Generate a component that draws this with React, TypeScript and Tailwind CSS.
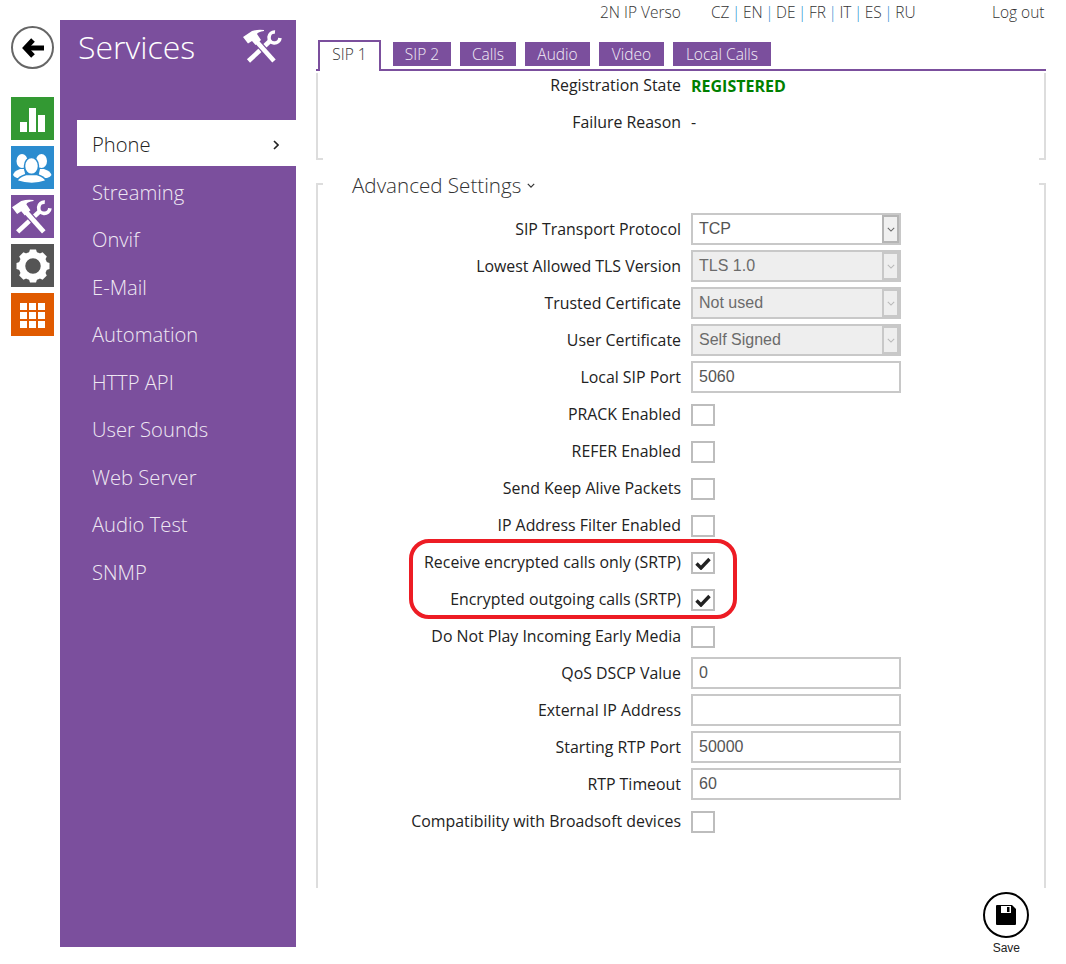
const navItems = ['Phone', 'Streaming', 'Onvif', 'E-Mail', 'Automation', 'HTTP API', 'User Sounds', 'Web Server', 'Audio Test', 'SNMP'];
const tabs = [
    { name: 'SIP 2', width: 'w-[58px]' },
    { name: 'Calls', width: 'w-[56px]' },
    { name: 'Audio', width: 'w-[65px]' },
    { name: 'Video', width: 'w-[65px]' },
    { name: 'Local Calls', width: 'w-[98px]' },
];
const langs = ['CZ', 'EN', 'DE', 'FR', 'IT', 'ES', 'RU'];

type Row =
    | { label: string; kind: 'select'; value: string; disabled?: boolean }
    | { label: string; kind: 'input'; value: string }
    | { label: string; kind: 'check'; checked?: boolean };

const rows: Row[] = [
    { label: 'SIP Transport Protocol', kind: 'select', value: 'TCP' },
    { label: 'Lowest Allowed TLS Version', kind: 'select', value: 'TLS 1.0', disabled: true },
    { label: 'Trusted Certificate', kind: 'select', value: 'Not used', disabled: true },
    { label: 'User Certificate', kind: 'select', value: 'Self Signed', disabled: true },
    { label: 'Local SIP Port', kind: 'input', value: '5060' },
    { label: 'PRACK Enabled', kind: 'check' },
    { label: 'REFER Enabled', kind: 'check' },
    { label: 'Send Keep Alive Packets', kind: 'check' },
    { label: 'IP Address Filter Enabled', kind: 'check' },
    { label: 'Receive encrypted calls only (SRTP)', kind: 'check', checked: true },
    { label: 'Encrypted outgoing calls (SRTP)', kind: 'check', checked: true },
    { label: 'Do Not Play Incoming Early Media', kind: 'check' },
    { label: 'QoS DSCP Value', kind: 'input', value: '0' },
    { label: 'External IP Address', kind: 'input', value: '' },
    { label: 'Starting RTP Port', kind: 'input', value: '50000' },
    { label: 'RTP Timeout', kind: 'input', value: '60' },
    { label: 'Compatibility with Broadsoft devices', kind: 'check' },
];

function ToolsIcon({ className }: { className: string }) {
    return (
        <svg viewBox="0 0 40 35" className={className} fill="none">
            <path d="M5.5 32 L27 12" stroke="white" strokeWidth="4.6" />
            <path d="M32 3 A5.5 5.5 0 1 0 37 9" stroke="white" strokeWidth="3.6" />
            <path d="M14 13 L31 32" stroke="#7b4f9d" strokeWidth="7" />
            <path d="M14 13 L31 32" stroke="white" strokeWidth="4.6" />
            <path d="M0 8 L9 2 Q15 0 21 1 L21 2 Q15 3 14 5 L18 11 L12.5 16 L9 12 L5 14.5 Z" fill="white" />
        </svg>
    );
}

function UsersIcon() {
    return (
        <svg viewBox="0 0 43 43" className="w-[43px] h-[43px]" fill="white">
            <ellipse cx="11" cy="15" rx="5.5" ry="7" />
            <path d="M2 29 Q3 25 9 23 L13 23 L15 32 L6 32 Q3 31 2 29 Z" />
            <ellipse cx="30.5" cy="15" rx="5.5" ry="7" />
            <path d="M40.5 29 Q39.5 25 33 23 L29 23 L27 32 L36 32 Q39.5 31 40.5 29 Z" />
            <ellipse cx="20.5" cy="20" rx="7" ry="8.5" stroke="#2b8ccf" strokeWidth="1.5" />
            <path d="M6 35 Q7 31 15 28.5 L26 28.5 Q34 31 35 35 Q21 40 6 35 Z" stroke="#2b8ccf" strokeWidth="1.5" />
        </svg>
    );
}

function GearIcon() {
    const angles = [0, 45, 90, 135, 180, 225, 270, 315];
    return (
        <svg viewBox="-17 -17 34 34" className="w-[34px] h-[34px]" fill="white">
            {angles.map((a) => (
                <path key={a} d="M-4.5 -12 L-3 -16.5 L3 -16.5 L4.5 -12 Z" transform={`rotate(${a})`} />
            ))}
            <circle r="11" fill="none" stroke="white" strokeWidth="6.5" />
        </svg>
    );
}

function SaveIcon() {
    return (
        <svg viewBox="0 0 20 20" className="w-[20px] h-[20px]">
            <path d="M1 0 H16 L20 4 V19 Q20 20 19 20 H1 Q0 20 0 19 V1 Q0 0 1 0 Z" fill="black" />
            <rect x="5" y="1" width="10" height="7" fill="white" />
            <rect x="11" y="2" width="2.5" height="5" fill="black" />
        </svg>
    );
}

function SelectBox({ value, disabled }: { value: string; disabled?: boolean }) {
    return (
        <div className={`flex w-[210px] h-[32px] border-2 border-[#c8c8c8] ${disabled ? 'bg-[#eeeeee] text-[#6b6b6b]' : 'bg-white text-[#555555]'}`}>
            <span className="flex-1 pl-[6px] text-[16px] leading-[28px] font-['Liberation_Sans',sans-serif]">{value}</span>
            <span className={`flex w-[17px] items-center justify-center border-2 ${disabled ? 'border-[#c8c8c8] text-[#b8b8b8]' : 'border-[#b5b5b5] bg-[#f0f0f0] text-[#666666]'}`}>
                <svg viewBox="0 0 10 6" className="w-[8px] h-[5px]" fill="none" stroke="currentColor" strokeWidth="1.3"><path d="M1 1 L5 5 L9 1" /></svg>
            </span>
        </div>
    );
}

function Control({ row }: { row: Row }) {
    if (row.kind === 'select') return <SelectBox value={row.value} disabled={row.disabled} />;
    if (row.kind === 'input') {
        return (
            <div className="w-[210px] h-[32px] border-2 border-[#c8c8c8] bg-white pl-[6px] text-[16px] leading-[28px] text-[#555555] font-['Liberation_Sans',sans-serif]">
                {row.value}
            </div>
        );
    }
    return (
        <div className="flex w-[24px] h-[22px] mt-[6px] items-center justify-center border-2 border-[#bdbdbd] bg-white">
            {row.checked && (
                <svg viewBox="0 0 16 13" className="w-[16px] h-[13px]" fill="none" stroke="#222222" strokeWidth="3.4"><path d="M1.5 6.5 L6 11 L14.5 2" /></svg>
            )}
        </div>
    );
}

export default function App() {
    return (
        <div className="relative flex w-[1066px] h-[964px] bg-white text-[15.9px] text-[#222222] font-['Open_Sans','Noto_Sans',sans-serif]">
            {/* icon rail */}
            <div className="flex flex-col w-[60px] pl-[11px]">
                <div className="flex w-[43px] h-[43px] mt-[26px] items-center justify-center rounded-full border-2 border-[#666666] bg-white">
                    <svg viewBox="0 0 22 20" className="w-[22px] h-[20px]" fill="none" stroke="black" strokeWidth="5">
                        <path d="M11 2 L3.5 10 L11 18" />
                        <path d="M4 10 H22" />
                    </svg>
                </div>
                <div className="flex flex-col gap-[6px] mt-[28px]">
                    <div className="flex w-[43px] h-[43px] items-end justify-center gap-[2px] pb-[8px] bg-[#339933]">
                        <div className="w-[7px] h-[10px] bg-white" />
                        <div className="w-[7px] h-[24px] bg-white" />
                        <div className="w-[7px] h-[17px] bg-white" />
                    </div>
                    <div className="flex w-[43px] h-[43px] items-center justify-center bg-[#2b8ccf]">
                        <UsersIcon />
                    </div>
                    <div className="flex w-[43px] h-[43px] items-center justify-center bg-[#7b4f9d]">
                        <ToolsIcon className="w-[41px] h-[36px]" />
                    </div>
                    <div className="flex w-[43px] h-[43px] items-center justify-center bg-[#555555]">
                        <GearIcon />
                    </div>
                    <div className="flex w-[43px] h-[43px] items-center justify-center pt-[2px] bg-[#e05a00]">
                        <div className="grid grid-cols-3 gap-[2px]">
                            {Array.from({ length: 9 }).map((_, i) => (
                                <div key={i} className="w-[7px] h-[7px] bg-white" />
                            ))}
                        </div>
                    </div>
                </div>
            </div>

            {/* purple sidebar */}
            <div className="flex flex-col w-[236px] h-[927px] mt-[20px] bg-[#7b4f9d]">
                <div className="flex justify-between pl-[18px] pr-[13px] pt-[5px] text-white">
                    <span className="text-[32px] leading-[44px] font-light">Services</span>
                    <ToolsIcon className="w-[40px] h-[35px] mt-[4px]" />
                </div>
                <div className="flex flex-col mt-[51px] ml-[17px]">
                    {navItems.map((item, i) => (
                        <div key={item} className={`flex items-center justify-between pl-[15px] pr-[17px] text-[20.2px] font-light ${i === 0 ? 'h-[46px] mb-[2px] pt-[3px] bg-white text-[#222222]' : 'h-[47.5px] text-[#efe8f3]'}`}>
                            <span>{item}</span>
                            {i === 0 && (
                                <svg viewBox="0 0 6 10" className="w-[6px] h-[10px]" fill="none" stroke="#222222" strokeWidth="1.6"><path d="M1 1 L5 5 L1 9" /></svg>
                            )}
                        </div>
                    ))}
                </div>
            </div>

            {/* main column */}
            <div className="flex flex-col w-[730px] ml-[20px]">
                <div className="flex h-[40px] pt-[1px] text-[15.5px] font-light text-[#333333]">
                    <span className="ml-[284px] w-[111px]">2N IP Verso</span>
                    <span className="flex gap-[2.5px] w-[281px]">
                        {langs.map((l, i) => (
                            <span key={l} className="flex gap-[2.5px]">
                                {i > 0 && <span className="text-[#2b8ccf]">|</span>}
                                {l}
                            </span>
                        ))}
                    </span>
                    <span>Log out</span>
                </div>

                <div className="flex items-end gap-[9px] h-[31px] pl-[2px] border-b-2 border-[#7b4f9d] text-[15.5px] font-light">
                    <div className="flex w-[63px] h-[31px] -mb-[2px] pb-[3px] items-center justify-center border-2 border-b-0 border-[#7b4f9d] bg-white mr-[3px] text-[#333333]">SIP 1</div>
                    {tabs.map((t) => (
                        <div key={t.name} className={`flex ${t.width} h-[24px] mb-[3px] pt-[1px] items-center justify-center bg-[#7b4f9d] text-[#f2ecf6]`}>{t.name}</div>
                    ))}
                </div>

                <div className="relative h-[87px] mt-[2px] border-x-2 border-[#dddddd]">
                    <div className="flex h-[26px] items-center">
                        <span className="w-[363px] text-right">Registration State</span>
                        <span className="ml-[10px] font-bold text-[16px] text-[#008000]">REGISTERED</span>
                    </div>
                    <div className="flex h-[26px] mt-[11px] items-center">
                        <span className="w-[363px] text-right">Failure Reason</span>
                        <span className="ml-[10px]">-</span>
                    </div>
                    <div className="absolute bottom-0 -left-[2px] w-[7px] h-[2px] bg-[#dddddd]" />
                    <div className="absolute bottom-0 -right-[2px] w-[7px] h-[2px] bg-[#dddddd]" />
                </div>

                <div className="relative h-[705px] mt-[23px] border-x-2 border-[#dddddd] pt-[30px]">
                    <div className="absolute top-0 -left-[2px] w-[7px] h-[2px] bg-[#dddddd]" />
                    <div className="absolute top-0 -right-[2px] w-[7px] h-[2px] bg-[#dddddd]" />
                    <div className="absolute top-[-14px] left-[34px] flex items-center gap-[6px] text-[20.6px] leading-[32px] font-light text-[#333333]">
                        Advanced Settings
                        <svg viewBox="0 0 10 6" className="w-[8px] h-[5px]" fill="none" stroke="#333333" strokeWidth="1.5"><path d="M1 1 L5 5 L9 1" /></svg>
                    </div>
                    <div className="flex flex-col gap-[5px]">
                        {rows.map((row) => (
                            <div key={row.label} className="flex h-[32px]">
                                <span className="w-[363px] pt-[4px] text-right leading-[24px]">{row.label}</span>
                                <div className="ml-[10px]"><Control row={row} /></div>
                            </div>
                        ))}
                    </div>
                </div>

                <div className="flex flex-col items-end mt-[4px] pr-[17px]">
                    <div className="flex w-[46px] h-[46px] items-center justify-center rounded-full border-2 border-black bg-white">
                        <SaveIcon />
                    </div>
                    <span className="mt-[3px] mr-[9px] text-[12px] leading-[14px] text-[#222222] font-['Liberation_Sans',sans-serif]">Save</span>
                </div>
            </div>

            {/* red annotation round the SRTP rows */}
            <div className="absolute left-[409px] top-[539px] w-[328px] h-[80px] rounded-[20px] border-4 border-[#ed1c24]" />
        </div>
    );
}
